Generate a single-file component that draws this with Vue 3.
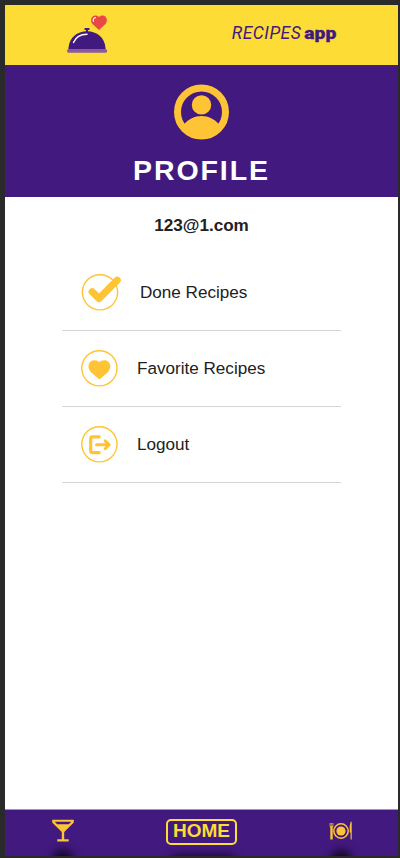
<script setup>
const items = [
  { id: 'done', label: 'Done Recipes' },
  { id: 'favorite', label: 'Favorite Recipes' },
  { id: 'logout', label: 'Logout' },
]
</script>

<template>
  <div class="device">
    <div class="screen">
      <header class="topbar">
        <svg class="cloche" viewBox="66 14 42 40" aria-hidden="true">
          <rect x="84.3" y="28" width="5.4" height="2" rx="1" fill="#42197f" />
          <rect x="86" y="29" width="2" height="3" fill="#42197f" />
          <path d="M68.500 50V48C69.300 37.500 77 31.200 87 31.200S104.700 37.500 105.500 48v2z" fill="#42197f" />
          <path d="M73.500 42.500C75.500 37.500 80.500 34.300 87 34.200" fill="none" stroke="#fff" stroke-width="1.400" stroke-linecap="round" />
          <rect x="67" y="49" width="40.200" height="3.800" rx="1.900" fill="#8e5a9f" />
          <path d="M99 30L92.500 24C90 21 91 15.800 95.300 15.500C97 15.500 98.300 16.200 99 17C99.700 16.200 101 15.500 102.700 15.500C107 15.800 108 21 105.500 24Z" fill="#e94743" />
          <path d="M93.400 21.300C92.900 19.200 93.800 17.800 95.500 17.600" fill="none" stroke="#fff" stroke-width="1.100" stroke-linecap="round" />
        </svg>
        <svg class="wordmark" viewBox="230 20 110 28">
          <text class="recipes" x="231.800" y="39.200" textLength="69">RECIPES</text>
          <text class="app" x="304.300" y="39.200" textLength="32" lengthAdjust="spacingAndGlyphs">app</text>
        </svg>
      </header>

      <section class="banner">
        <svg class="avatar" viewBox="0 0 56 56" aria-hidden="true">
          <circle cx="27.500" cy="28" r="24" fill="none" stroke="#ffc436" stroke-width="7" />
          <circle cx="27.500" cy="20.900" r="9.700" fill="#ffc436" />
          <path d="M10 40.500C14.500 35 20.500 32 27.500 32S40.500 35 45 40.500C40.500 48.500 34.500 51.500 27.500 51.500S14.500 48.500 10 40.500Z" fill="#ffc436" />
        </svg>
        <h1>PROFILE</h1>
      </section>

      <main>
        <p class="email">123@1.com</p>
        <div class="menu">
          <button v-for="item in items" :key="item.id" class="row" type="button">
            <svg v-if="item.id === 'done'" class="icon wide" viewBox="0 0 40 38" aria-hidden="true">
              <circle class="ring" cx="19" cy="18.300" r="17.600" />
              <path d="M11.200 17.800L18 24.500L36.200 6.200" fill="none" stroke="#ffc436" stroke-width="7.200" stroke-linecap="round" stroke-linejoin="round" />
            </svg>
            <svg v-else class="icon" viewBox="0 0.700 37 38" aria-hidden="true">
              <circle class="ring" cx="18.400" cy="19" r="17.600" />
              <path v-if="item.id === 'favorite'" d="M18.400 30.300L9.700 22.600C5.600 18.100 7.500 11 13.200 11C15.700 11 17.500 11.800 18.400 13C19.300 11.800 21.100 11 23.600 11C29.300 11 31.200 18.100 27.100 22.600Z" fill="#ffc436" />
              <g v-else fill="none" stroke="#ffc436" stroke-linecap="round" stroke-linejoin="round">
                <path d="M18.200 11.600H11.300Q9.700 11.600 9.700 13.200V25.800Q9.700 27.400 11.300 27.400H18.200" stroke-width="3.200" />
                <path d="M15.500 19.500H28M24.200 15.600L28.200 19.500L24.200 23.400" stroke-width="3" />
              </g>
            </svg>
            <span>{{ item.label }}</span>
          </button>
        </div>
      </main>

      <footer>
        <svg class="drink" viewBox="0 0 24 24" aria-hidden="true">
          <path d="M1.200 .8h21.600v2.700L13.200 13v7.200h4.500v2.300H6.300v-2.300h4.500V13L1.200 3.500z" fill="#ffc436" />
          <path d="M3.700 2.800h16.600l-2.500 2.500H6.200z" fill="#42197f" />
        </svg>
        <button class="home" type="button"><span>HOME</span></button>
        <svg class="meal" viewBox="0 0 24 20" aria-hidden="true">
          <circle cx="12" cy="10" r="7.200" fill="none" stroke="#ffc436" stroke-width="1.500" />
          <circle cx="12" cy="10" r="4.600" fill="#ffc436" />
          <path d="M.7 2h3.600v3.200L3.700 6.500v12H1.300v-12L.7 5.200z" fill="#ffc436" />
          <path d="M.8 2.200h3.400v3H.8z" fill="#a36f51" />
          <path d="M20.700 11.500V5l1-4.200h1v17.700h-1.100v-7z" fill="#ffc436" />
        </svg>
        <i class="shade shade-left"></i>
        <i class="shade shade-mid"></i>
        <i class="shade shade-right"></i>
      </footer>
    </div>
  </div>
</template>

<style>
body { margin: 0; background: #2a2a2a; }
</style>

<style scoped>
* { box-sizing: border-box; }
.device {
  width: 400px;
  height: 858px;
  padding: 5px 2px 2px 5px;
  background: #2a2a2a;
  font-family: "Liberation Sans", Arial, sans-serif;
}
.screen {
  display: flex;
  flex-direction: column;
  height: 851px;
  background: #fff;
}
.topbar {
  display: flex;
  justify-content: space-between;
  height: 60px;
  padding: 9px 58px 0 61px;
  background: #fddc35;
}
.cloche { width: 42px; height: 40px; }
.wordmark { width: 110px; height: 28px; margin-top: 6px; fill: #42197f; }
.recipes { font: italic 400 17.5px Roboto, sans-serif; }
.app { font: 900 17px Roboto, sans-serif; stroke: #42197f; stroke-width: .3px; }
.banner {
  display: flex;
  flex-direction: column;
  align-items: center;
  height: 132px;
  padding-top: 19px;
  background: #42197f;
}
.avatar { width: 56px; height: 56px; flex: none; }
h1 {
  margin: 13px 0 0;
  color: #fff;
  font-size: 28.5px;
  line-height: 34px;
  letter-spacing: 1.9px;
}
main { flex: 1; }
.email {
  margin: 19px 0 0;
  color: #212121;
  font-size: 17.1px;
  font-weight: 700;
  line-height: 20px;
  text-align: center;
}
.menu { width: 279px; margin: 19px 0 0 57px; }
.row {
  display: flex;
  align-items: center;
  width: 100%;
  height: 76px;
  padding: 0 0 0 19px;
  border: 0;
  border-bottom: 1px solid #d5d5d5;
  background: none;
  color: #212121;
  font: 17.1px "Liberation Sans", Arial, sans-serif;
  text-align: left;
}
.icon { width: 37px; height: 38px; margin-right: 19px; flex: none; }
.wide { width: 40px; }
.ring { fill: none; stroke: #ffc436; stroke-width: 1.4; }
footer {
  position: relative;
  display: flex;
  justify-content: space-between;
  height: 47px;
  padding: 9px 45px 0 46px;
  border-top: 1px solid #a094b8;
  background: #42197f;
  overflow: hidden;
}
.drink { width: 24px; height: 24px; }
.home {
  width: 71px;
  height: 26px;
  margin-right: 1px;
  padding: 0 0 2px;
  border: 2px solid #fddc35;
  border-radius: 5px;
  background: none;
  color: #fddc35;
  font: 700 19px/20px "Liberation Sans", Arial, sans-serif;
}
.meal { width: 24px; height: 20px; margin-top: 2px; }
.shade {
  position: absolute;
  top: 40px;
  width: 20px;
  height: 20px;
  border-radius: 8px;
  background: #160829;
  filter: blur(4px);
}
.shade-left { left: 48px; }
.shade-mid { left: 165px; top: 45px; width: 66px; }
.shade-right { left: 326px; }
</style>
